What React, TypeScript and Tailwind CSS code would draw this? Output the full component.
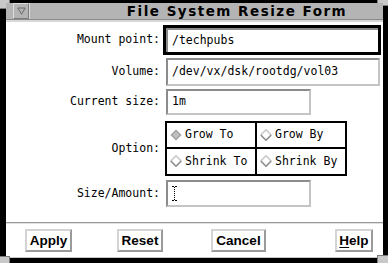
import React from "react";

const mono = { fontFamily: '"DejaVu Sans Mono", "Liberation Mono", monospace' };

function Diamond({ selected }: { selected?: boolean }) {
  return (
    <svg width="12" height="12" viewBox="0 0 12 12" className="shrink-0">
      {selected ? (
        <>
          <polygon points="6,0.5 11.5,6 6,11.5 0.5,6" fill="#a0a0a0" />
          <polygon points="6,2.5 9.5,6 6,9.5 2.5,6" fill="#c0c0c0" />
        </>
      ) : (
        <>
          <polyline points="0.8,6 6,0.8 11.2,6" fill="none" stroke="#c8c8c8" strokeWidth="1.6" />
          <polyline points="0.8,6 6,11.2 11.2,6" fill="none" stroke="#8c8c8c" strokeWidth="1.6" />
        </>
      )}
    </svg>
  );
}

function Field({ value, className, children }: { value?: string; className: string; children?: React.ReactNode }) {
  return (
    <div className={`flex items-center bg-white border-2 border-t-[#8c8c8c] border-l-[#8c8c8c] border-b-[#c4c4c4] border-r-[#c4c4c4] pl-[4px] text-[11.5px] text-black ${className}`} style={mono}>
      {value}
      {children}
    </div>
  );
}

function Row({ label, children, className }: { label: string; children: React.ReactNode; className: string }) {
  return (
    <div className={`flex items-center ${className}`}>
      <div className="w-[154px] text-right text-[11.5px] text-black" style={mono}>{label}</div>
      {children}
    </div>
  );
}

function Btn({ children, className }: { children: React.ReactNode; className: string }) {
  return (
    <button className={`h-[23px] flex items-center justify-center bg-white border-2 border-t-[#d4d4d4] border-l-[#d4d4d4] border-b-[#9a9a9a] border-r-[#9a9a9a] font-['Liberation_Sans',Arial,sans-serif] font-bold text-[13.5px] text-black leading-none ${className}`}>
      {children}
    </button>
  );
}

export default function App() {
  return (
    <div className="relative w-[388px] h-[263px] bg-black pt-[3px] pl-[6px] pr-[5px] pb-[5px] flex flex-col overflow-hidden">
      {/* resize corners */}
      <div className="absolute left-0 top-0 w-[10px] h-[9px] bg-[#c8c8c8] border-r border-b border-[#7a7a7a]" />
      <div className="absolute right-0 top-0 w-[11px] h-[6px] bg-[#c8c8c8] border-l border-b border-[#7a7a7a]" />
      <div className="absolute left-0 bottom-0 w-[10px] h-[7px] bg-[#c8c8c8] border-r border-t border-[#7a7a7a]" />
      <div className="absolute right-0 bottom-0 w-[11px] h-[8px] bg-[#c8c8c8] border-l border-t border-[#7a7a7a]" />

      {/* title bar */}
      <div className="relative h-[17px] bg-[#b4b4b4] border-b border-[#8a8a8a] flex items-stretch shrink-0">
        <div className="ml-[7px] w-[16px] border border-t-[#dcdcdc] border-l-[#dcdcdc] border-b-[#7c7c7c] border-r-[#7c7c7c] flex items-center justify-center">
          <svg width="9" height="8" viewBox="0 0 9 8">
            <polygon points="0.8,1 8.2,1 4.5,7.2" fill="none" stroke="#6a6a6a" strokeWidth="1" />
          </svg>
        </div>
        <div className="flex-1 border-l border-[#dcdcdc] pl-[61px] flex items-center justify-center font-['DejaVu_Sans',sans-serif] font-bold text-[13.5px] tracking-[1.5px] text-black">
          File System Resize Form
        </div>
      </div>
      <div className="h-[2px] bg-[#d8d8d8] shrink-0" />

      {/* form body */}
      <div className="flex-1 bg-white flex flex-col">
        <Row label="Mount point:" className="mt-[3px] h-[30px]">
          <div className="ml-[3px] w-[218px] h-[30px] border-[3px] border-black">
            <Field value="/techpubs" className="h-full w-full border-r-0 border-b-0" />
          </div>
        </Row>
        <Row label="Volume:" className="mt-[3px] h-[28px]">
          <Field value="/dev/vx/dsk/rootdg/vol03" className="ml-[6px] w-[214px] h-[28px]" />
        </Row>
        <Row label="Current size:" className="mt-[3px] h-[26px]">
          <Field value="1m" className="ml-[6px] w-[145px] h-[26px]" />
        </Row>
        <Row label="Option:" className="mt-[6px] h-[55px]">
          <div className="ml-[5px] w-[182px] h-[55px] border-2 border-black grid grid-cols-[90px_1fr] grid-rows-2 text-[11.5px] text-black" style={mono}>
            <div className="flex items-center gap-[3px] pl-[3px] border-r-2 border-b-2 border-black">
              <Diamond selected />
              <span>Grow To</span>
            </div>
            <div className="flex items-center gap-[3px] pl-[3px] border-b-2 border-black">
              <Diamond />
              <span>Grow By</span>
            </div>
            <div className="flex items-center gap-[3px] pl-[3px] border-r-2 border-black">
              <Diamond />
              <span>Shrink To</span>
            </div>
            <div className="flex items-center gap-[3px] pl-[3px]">
              <Diamond />
              <span>Shrink By</span>
            </div>
          </div>
        </Row>
        <Row label="Size/Amount:" className="mt-[4px] h-[27px]">
          <Field className="ml-[6px] w-[145px] h-[27px]">
            <svg width="5" height="15" viewBox="0 0 5 15">
              <path d="M0 0.5H2M3 0.5H5M0 14.5H2M3 14.5H5" stroke="#000" strokeWidth="1" />
              <path d="M2.5 1V14" stroke="#000" strokeWidth="1" strokeDasharray="1 1" />
            </svg>
          </Field>
        </Row>

        <div className="flex-1" />
        <div className="h-[2px] border-t border-[#9a9a9a] border-b border-b-[#e0e0e0]" />
        <div className="h-[33px] flex items-center">
          <Btn className="ml-[19px] w-[47px]">Apply</Btn>
          <Btn className="ml-[45px] w-[46px]">Reset</Btn>
          <Btn className="ml-[48px] w-[55px]">Cancel</Btn>
          <Btn className="ml-[69px] w-[38px]">
            <span className="underline underline-offset-2">H</span>elp
          </Btn>
        </div>
        <div className="h-[1px] bg-[#c8c8c8]" />
      </div>
    </div>
  );
}
